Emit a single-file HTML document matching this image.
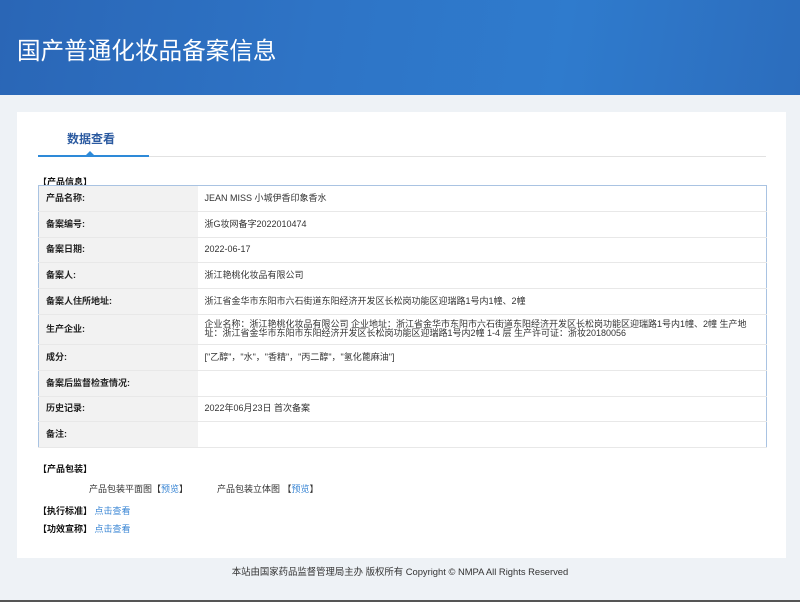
<!DOCTYPE html>
<html><head><meta charset="utf-8"><style>
*{margin:0;padding:0;box-sizing:border-box}
body{width:800px;height:602px;background:#eef2f6;font-family:"Liberation Sans","Noto Sans CJK SC",sans-serif;font-size:9px;color:#333;position:relative;overflow:hidden}
.hd{position:absolute;left:0;top:0;width:800px;height:95px;background:linear-gradient(100deg,#2a66b6 0%,#2e74c6 40%,#2f7bcd 70%,#2c6dbd 100%)}
.hd h1{position:absolute;left:17px;top:32px;font-size:23.6px;font-weight:normal;color:#fff}
.pn{position:absolute;left:17px;top:112px;width:769px;height:446px;background:#fff}
.tab{position:absolute;left:50px;top:18px;font-size:12px;font-weight:bold;color:#2b5aa0}
.ln{position:absolute;left:21px;top:44px;width:728px;height:1px;background:#e2e2e2}
.ul{position:absolute;left:21px;top:43px;width:111px;height:2px;background:#2e8ad8}
.tri{position:absolute;left:69px;top:39px;width:0;height:0;border-left:4px solid transparent;border-right:4px solid transparent;border-bottom:4px solid #2e8ad8}
.sec{position:absolute;font-weight:bold;color:#111;font-size:9px}
table{position:absolute;left:21px;top:73px;width:729px;border-collapse:collapse;border:1px solid #a9c3e2}
td{border-bottom:1px solid #e8e8e8;height:25.8px;padding:0 7px 0 7px;vertical-align:middle;line-height:9px}
td.l{width:159px;background:#f2f2f2;font-weight:bold;color:#222;padding-right:0}
a{color:#3a86d4;text-decoration:none}
.ft{position:absolute;left:0;top:564px;width:800px;text-align:center;font-size:9.4px;color:#333}
.bt{position:absolute;left:0;top:600px;width:800px;height:2px;background:#555}
</style></head><body>
<div class="hd"><h1>国产普通化妆品备案信息</h1></div>
<div class="pn">
<div class="tab">数据查看</div>
<div class="ln"></div><div class="ul"></div><div class="tri"></div>
<div class="sec" style="left:21px;top:63px">【产品信息】</div>
<table>
<tr><td class="l">产品名称:</td><td>JEAN MISS 小城伊香印象香水</td></tr>
<tr><td class="l">备案编号:</td><td>浙G妆网备字2022010474</td></tr>
<tr><td class="l">备案日期:</td><td>2022-06-17</td></tr>
<tr><td class="l">备案人:</td><td>浙江艳桃化妆品有限公司</td></tr>
<tr><td class="l">备案人住所地址:</td><td>浙江省金华市东阳市六石街道东阳经济开发区长松岗功能区迎瑞路1号内1幢、2幢</td></tr>
<tr><td class="l" style="height:30px">生产企业:</td><td style="height:30px">企业名称：浙江艳桃化妆品有限公司 企业地址：浙江省金华市东阳市六石街道东阳经济开发区长松岗功能区迎瑞路1号内1幢、2幢 生产地<br>址：浙江省金华市东阳市东阳经济开发区长松岗功能区迎瑞路1号内2幢 1-4 层 生产许可证：浙妆20180056</td></tr>
<tr><td class="l">成分:</td><td>["乙醇"，"水"，"香精"，"丙二醇"，"氢化蓖麻油"]</td></tr>
<tr><td class="l">备案后监督检查情况:</td><td></td></tr>
<tr><td class="l">历史记录:</td><td>2022年06月23日 首次备案</td></tr>
<tr><td class="l">备注:</td><td></td></tr>
</table>
<div class="sec" style="left:21px;top:350px">【产品包装】</div>
<div style="position:absolute;left:72px;top:370px">产品包装平面图【<a>预览</a>】</div>
<div style="position:absolute;left:200px;top:370px">产品包装立体图 【<a>预览</a>】</div>
<div style="position:absolute;left:21px;top:392px"><b style="color:#111">【执行标准】</b> <a>点击查看</a></div>
<div style="position:absolute;left:21px;top:410px"><b style="color:#111">【功效宣称】</b> <a>点击查看</a></div>
</div>
<div class="ft">本站由国家药品监督管理局主办 版权所有 Copyright © NMPA All Rights Reserved</div>
<div class="bt"></div>
</body></html>
